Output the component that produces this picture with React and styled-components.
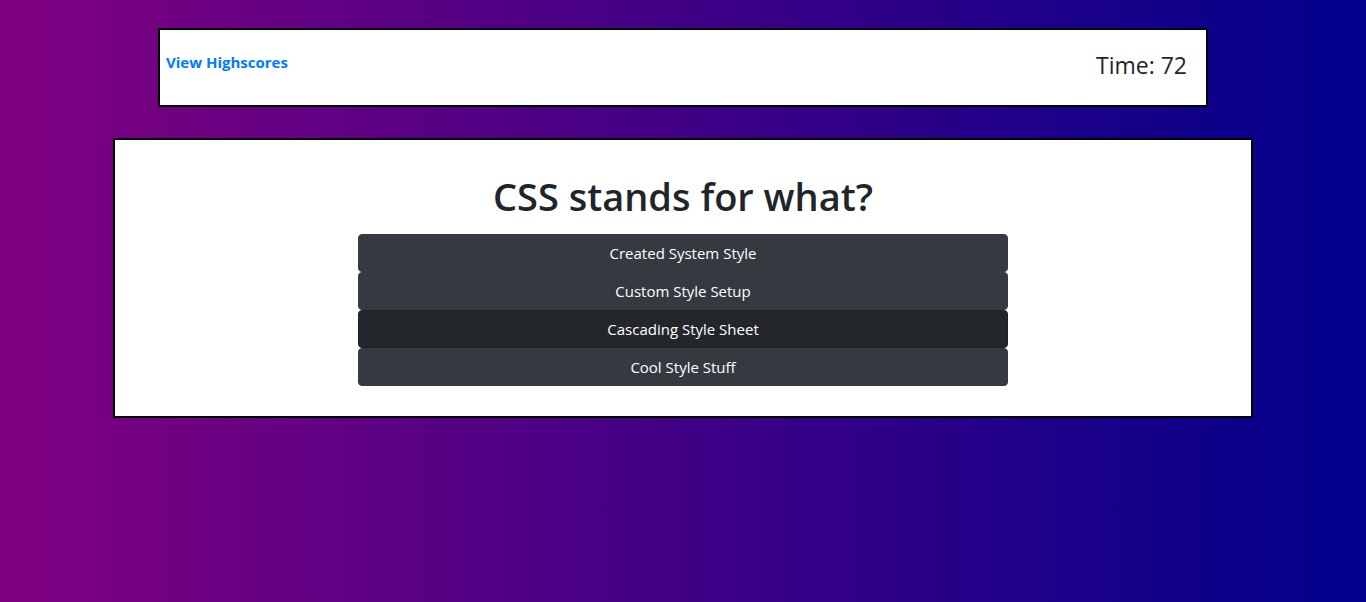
import React from 'react'
import styled, { createGlobalStyle } from 'styled-components'

const GlobalStyle = createGlobalStyle`
  html, body {
    margin: 0;
    min-height: 100%;
  }
  body {
    height: 602px;
    background: linear-gradient(to right, #800080, #00008b);
    font-family: "Open Sans", "Noto Sans", sans-serif;
    color: #212529;
  }
`

const Page = styled.div`
  padding-top: 28px;
  display: flex;
  flex-direction: column;
  gap: 31px;
`

const Header = styled.header`
  width: 1050px;
  height: 79px;
  margin: 0 auto;
  box-sizing: border-box;
  background: #fff;
  border: 2px solid #000;
  display: flex;
  justify-content: space-between;
  align-items: flex-start;
  padding: 20px 19px 0 6px;
`

const HighscoresLink = styled.a`
  font-size: 15px;
  font-weight: 700;
  line-height: 24px;
  color: #007bff;
  text-decoration: none;
  cursor: pointer;
`

const Timer = styled.div`
  font-size: 23px;
  font-weight: 500;
  line-height: 30px;
`

const Card = styled.main`
  width: 1140px;
  margin: 0 auto;
  box-sizing: border-box;
  background: #fff;
  border: 2px solid #000;
  padding: 32px 0 30px;
  display: flex;
  flex-direction: column;
  align-items: center;
`

const Question = styled.h1`
  margin: 0 0 14px;
  font-size: 38px;
  font-weight: 600;
  line-height: 48px;
`

const Choices = styled.div`
  width: 650px;
  display: flex;
  flex-direction: column;
`

const Choice = styled.button`
  height: 38px;
  border: 1px solid ${p => (p.$active ? '#1d2124' : '#343a40')};
  border-radius: 4px;
  background: ${p => (p.$active ? '#23272b' : '#343a40')};
  color: #fff;
  font-family: inherit;
  font-size: 15px;
  cursor: pointer;
`

const answers = [
  'Created System Style',
  'Custom Style Setup',
  'Cascading Style Sheet',
  'Cool Style Stuff',
]

export default function App() {
  return (
    <>
      <GlobalStyle />
      <Page>
        <Header>
          <HighscoresLink>View Highscores</HighscoresLink>
          <Timer>Time: 72</Timer>
        </Header>
        <Card>
          <Question>CSS stands for what?</Question>
          <Choices>
            {answers.map((a, i) => (
              <Choice key={a} $active={i === 2}>{a}</Choice>
            ))}
          </Choices>
        </Card>
      </Page>
    </>
  )
}
